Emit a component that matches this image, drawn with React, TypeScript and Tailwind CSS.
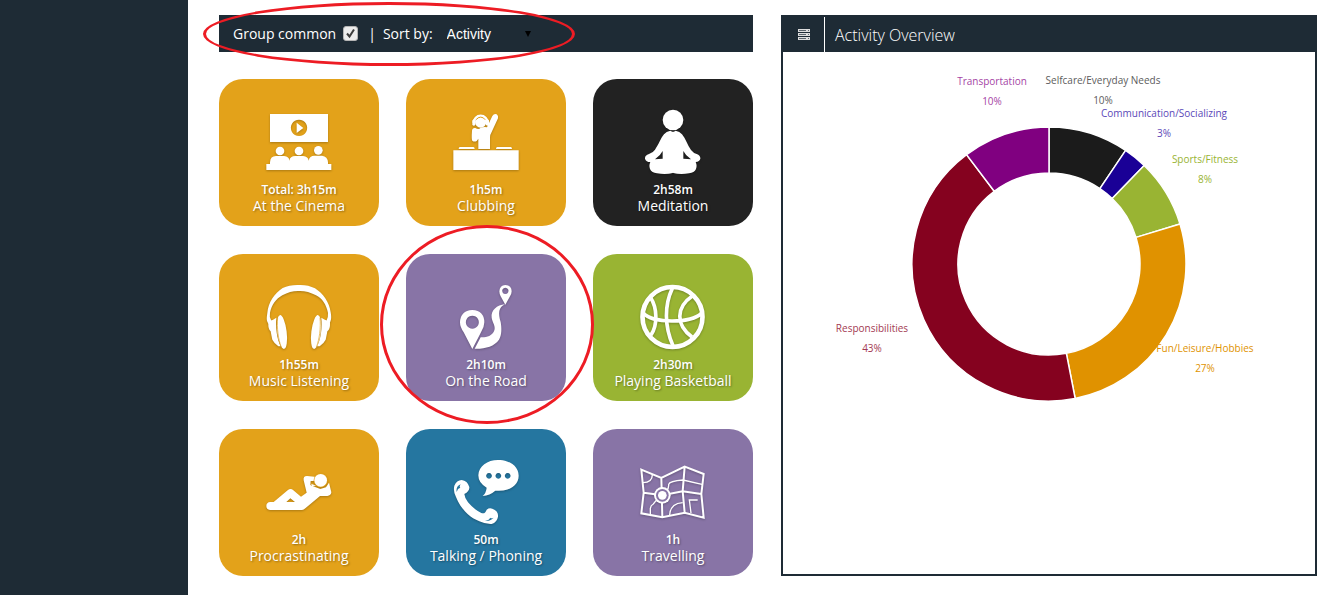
import type { ReactNode } from "react";

function Icon({ viewBox, children }: { viewBox: string; children: ReactNode }) {
  return (
    <svg
      viewBox={viewBox}
      aria-hidden="true"
      fill="currentColor"
      className="size-16 overflow-visible drop-shadow-[0_1px_1px_rgba(0,0,0,0.25)]"
    >
      {children}
    </svg>
  );
}

const CinemaIcon = () => (
  <Icon viewBox="171 120 192 192">
    <path
      fillRule="evenodd"
      d="M180 132H354V216H180ZM267 149a24.500 24.500 0 1 0 .1 0ZM260 158 280 174 260 189Z"
    />
    <circle cx="210" cy="243" r="13" />
    <circle cx="267" cy="243" r="13" />
    <circle cx="325" cy="241" r="13" />
    <path d="M169 282H180V277Q181 258 198 258H222Q238 260 238 272Q240 258 256 258H279Q295 260 296 272Q298 257 314 257H336Q353 259 354 277V282H364V300H169Z" />
  </Icon>
);

const ClubbingIcon = () => (
  <Icon viewBox="174 120 192 192">
    <path d="M172 241H368V300H172ZM188 237Q188 231 192 231H232Q236 231 236 237ZM300 237Q300 231 304 231H344Q348 231 348 237Z" />
    <circle cx="254" cy="156" r="17" />
    <path
      d="M233 158a21 21 0 0 1 42 0"
      fill="none"
      stroke="currentColor"
      strokeWidth="7"
    />
    <rect x="229" y="149" width="9" height="18" rx="4" />
    <rect x="270" y="149" width="9" height="18" rx="4" />
    <path d="M241 149a15 15 0 0 1 26 0" fill="none" stroke="#e3a21a" strokeWidth="3" />
    <path d="M228 182Q229 173 238 174Q248 180 254 173Q266 169 273 172L289 138Q294 130 302 133Q308 138 306 145L287 186Q282 194 282 202V237H247V206L242 213Q235 217 229 212Q226 208 228 182Z" />
  </Icon>
);

const MeditationIcon = () => (
  <Icon viewBox="174 120 192 192">
    <circle cx="270" cy="150" r="31" />
    <path
      fillRule="evenodd"
      d="M262 182Q270 187 278 182Q290 184 297 193C308 206 313 225 324 240Q332 250 341 252Q353 257 352 266Q350 275 338 276Q343 286 339 297Q334 308 318 310Q292 314 270 309Q248 314 222 310Q206 308 201 297Q197 286 202 276Q189 276 186 266Q185 256 198 252Q210 248 216 239C227 224 234 203 243 193Q250 184 262 182ZM239 243Q232 257 216 268L239 266ZM301 243V266L324 268Q308 257 301 243Z"
    />
    <path d="M266 182H274L270 186ZM265 312 270 308 275 312Z" fill="#222222" />
  </Icon>
);

const HeadphonesIcon = () => (
  <Icon viewBox="171 120 192 192">
    <path d="M177 238C168 228 170 218 172 204C175 172 193 145 218 129Q239 119 267 120Q294 119 315 130C340 146 358 172 362 202C365 219 364 228 356 239L350 226Q355 216 354 204C349 178 336 160 318 151Q292 137 267 138Q242 137 217 151C198 161 185 180 180 203Q177 216 184 227Z" />
    <path d="M175 233Q178 226 188 225L199 218C196 247 201 282 212 304L205 304Q192 294 187 284Q184 271 182 259Q174 252 175 233Z" />
    <path d="M360 233Q357 226 346 225L334 218C337 247 333 282 321 304L329 304Q342 294 347 284Q350 271 352 259Q361 252 360 233Z" />
    <ellipse cx="216" cy="261" rx="14" ry="51" transform="rotate(-7 216 261)" />
    <ellipse cx="318" cy="261" rx="14" ry="51" transform="rotate(7 318 261)" />
    <path
      d="M203 218C200 250 205 283 214 307M330 218C333 250 328 283 319 307"
      fill="none"
      stroke="#e3a21a"
      strokeWidth="2"
    />
  </Icon>
);

const RoadIcon = () => (
  <Icon viewBox="234 195 192 192">
    <path
      fillRule="evenodd"
      d="M289 270Q325 272 325 307Q325 321 315 337L289 387L263 337Q252 321 252 307Q253 272 289 270ZM289 287a19.500 19.500 0 1 0 .1 0Z"
    />
    <path
      fillRule="evenodd"
      d="M388 195Q407 196 407 214Q407 221 402 229L388 254L374 229Q370 221 370 214Q371 196 388 195ZM388 203a9.500 9.500 0 1 0 .1 0Z"
    />
    <path d="M387 253C363 255 344 271 347 293C349 308 361 319 354 334C347 348 332 353 314 352L296 386C327 387 355 379 369 359C378 344 377 324 374 306C366 281 367 262 387 253Z" />
  </Icon>
);

const BasketballIcon = () => (
  <Icon viewBox="174 120 192 192">
    <g fill="none" stroke="currentColor">
      <circle cx="268.500" cy="216" r="90" strokeWidth="14" />
      <g strokeWidth="11">
        <path d="M182 205C208 235 323 236 355 205" />
        <path d="M268 130C244 180 244 244 270 302" />
        <path d="M203 158C222 187 225 239 204 270" />
        <path d="M328 153C278 187 278 240 327 276" />
      </g>
    </g>
  </Icon>
);

const RecliningIcon = () => (
  <Icon viewBox="171 105 192 192">
    <path
      fillRule="evenodd"
      d="M181 231H191L233 196Q242 188 250 196L273 215L290 203L281 166Q279 153 291 153L314 155L318 163L315 168L302 168L301 180L317 187L331 192L348 187L357 173L364 202Q363 212 352 213L330 213L286 250Q281 255 276 255H180Q169 254 169 243Q169 232 181 231ZM229 231H255L241 220ZM303 176 307 183 319 182Z"
    />
    <circle cx="332" cy="166" r="21" fill="#e3a21a" />
    <circle cx="332" cy="166" r="19" />
  </Icon>
);

const PhoneIcon = () => (
  <Icon viewBox="174 105 192 192">
    <path
      fillRule="evenodd"
      d="M306 105C341 105 368 124 368 152C368 181 340 201 298 197Q282 211 260 213Q270 205 272 188Q247 174 247 151C248 123 274 105 306 105ZM279 144a8.500 8.500 0 1 0 .1 0ZM307 144a8.500 8.500 0 1 0 .1 0ZM335 144a8.500 8.500 0 1 0 .1 0Z"
    />
    <path d="M197 165Q214 167 220 186Q221 199 205 207Q206 219 216 232Q235 254 256 264Q267 268 272 254Q280 247 289 251Q308 258 306 275Q303 292 287 297Q269 298 250 289C218 276 193 249 180 216Q171 199 175 182Q182 166 197 165Z" />
    <path
      d="M182 201Q179 184 194 178Q189 185 193 188L186 192ZM267 287Q284 289 293 278Q286 282 283 278L278 284Z"
      fill="#2576a0"
    />
  </Icon>
);

const MapIcon = () => (
  <Icon viewBox="174 105 192 192">
    <g fill="none" stroke="currentColor">
      <path
        strokeWidth="6"
        d="M175 134 235 159 305 125 362 147 355 207 362 278 305 263 238 277 175 265 182 203ZM235 159 238 277M305 125 299 199 305 263M182 203 238 211 299 199 355 207"
      />
      <path
        strokeWidth="4"
        d="M208 149Q208 172 180 173M250 198Q258 190 257 178Q260 168 300 165L357 178M202 268V250Q203 241 211 237L222 223M260 270Q262 235 299 233M324 264 319 225H344"
      />
    </g>
    <circle cx="238" cy="211" r="25" />
    <circle cx="238" cy="211" r="19" fill="#8874a6" />
    <circle cx="238" cy="211" r="13" />
  </Icon>
);

const activities = [
  { name: "At the Cinema", time: "Total: 3h15m", color: "bg-[#e3a21a]", icon: <CinemaIcon /> },
  { name: "Clubbing", time: "1h5m", color: "bg-[#e3a21a]", icon: <ClubbingIcon /> },
  { name: "Meditation", time: "2h58m", color: "bg-[#222222]", icon: <MeditationIcon /> },
  { name: "Music Listening", time: "1h55m", color: "bg-[#e3a21a]", icon: <HeadphonesIcon /> },
  { name: "On the Road", time: "2h10m", color: "bg-[#8874a6]", icon: <RoadIcon />, circled: true },
  { name: "Playing Basketball", time: "2h30m", color: "bg-[#99b433]", icon: <BasketballIcon /> },
  { name: "Procrastinating", time: "2h", color: "bg-[#e3a21a]", icon: <RecliningIcon /> },
  { name: "Talking / Phoning", time: "50m", color: "bg-[#2576a0]", icon: <PhoneIcon /> },
  { name: "Travelling", time: "1h", color: "bg-[#8874a6]", icon: <MapIcon /> },
];

// Angles run clockwise in degrees from twelve o'clock.
const slices = [
  { label: "Selfcare/Everyday Needs", share: "10%", from: 0, to: 34, fill: "#1b1b1b", text: "#5c5c5c", x: 274, y: 32 },
  { label: "Communication/Socializing", share: "3%", from: 34, to: 44, fill: "#1a0096", text: "#5b48b8", x: 335, y: 65 },
  { label: "Sports/Fitness", share: "8%", from: 44, to: 73, fill: "#99b433", text: "#99b433", x: 376, y: 111 },
  { label: "Fun/Leisure/Hobbies", share: "27%", from: 73, to: 169, fill: "#e09200", text: "#e09200", x: 376, y: 300 },
  { label: "Responsibilities", share: "43%", from: 169, to: 323, fill: "#85021f", text: "#a33a52", x: 43, y: 280 },
  { label: "Transportation", share: "10%", from: 323, to: 360, fill: "#800080", text: "#a544a5", x: 163, y: 33 },
];

function point(angle: number, radius: number) {
  const a = (angle * Math.PI) / 180;
  return `${(220 + radius * Math.sin(a)).toFixed(2)} ${(212 - radius * Math.cos(a)).toFixed(2)}`;
}

function slicePath(from: number, to: number) {
  const large = to - from > 180 ? 1 : 0;
  return `M${point(from, 137)}A137 137 0 ${large} 1 ${point(to, 137)}L${point(to, 91)}A91 91 0 ${large} 0 ${point(from, 91)}Z`;
}

function DonutChart() {
  return (
    <svg
      viewBox="0 0 440 370"
      role="img"
      aria-label="Share of time by activity group"
      className="mx-auto w-[440px] max-w-full"
    >
      {slices.map((s) => (
        <path
          key={s.label}
          d={slicePath(s.from, s.to)}
          fill={s.fill}
          stroke="#ffffff"
          strokeWidth="1.5"
        />
      ))}
      {slices.map((s) => (
        <g key={s.label} fill={s.text} textAnchor="middle" className="text-[10px]">
          <text x={s.x} y={s.y}>
            {s.label}
          </text>
          <text x={s.x} y={s.y + 20}>
            {s.share}
          </text>
        </g>
      ))}
    </svg>
  );
}

function Toolbar() {
  return (
    <div className="relative flex h-[37px] items-center bg-[#1e2b35] px-3.5 text-sm text-white">
      <label htmlFor="group-common">Group common</label>
      <span className="relative ml-[7px] flex size-[15px]">
        <input
          id="group-common"
          type="checkbox"
          defaultChecked
          className="peer size-full appearance-none rounded-[3px] border border-[#b5b5b5] bg-[#ececec]"
        />
        <svg
          viewBox="0 0 15 15"
          aria-hidden="true"
          className="pointer-events-none absolute inset-0 hidden peer-checked:block"
        >
          <path
            d="M4 7.500 6.500 10.500 11 3.500"
            fill="none"
            stroke="#3c3c3c"
            strokeWidth="2"
          />
        </svg>
      </span>
      <span className="ml-2.5 mr-[7px]">|</span>
      <label htmlFor="sort-by">Sort by:</label>
      <span className="relative ml-3.5 flex items-center">
        <select
          id="sort-by"
          defaultValue="Activity"
          className="w-[88px] appearance-none bg-transparent font-['Liberation_Sans',Arial,sans-serif] text-sm text-white outline-none"
        >
          <option>Activity</option>
        </select>
        <svg
          viewBox="0 0 6 6"
          aria-hidden="true"
          className="pointer-events-none absolute right-1 size-1.5"
        >
          <path d="M0 0H6L3 6Z" fill="#000000" />
        </svg>
      </span>
      <span className="pointer-events-none absolute -left-4 -top-[13px] z-10 h-16 w-[372px] rounded-[50%] border-[3px] border-[#ed1c24]" />
    </div>
  );
}

export default function App() {
  return (
    <div className="flex min-h-screen bg-white font-['Open_Sans',sans-serif]">
      <aside className="w-[188px] shrink-0 bg-[#1e2b35]" />
      <main className="grid min-w-0 flex-1 grid-cols-[534fr_536fr] gap-7 pb-[19px] pl-[31px] pr-6 pt-[15px]">
        <section aria-label="Activities" className="flex min-w-0 flex-col gap-[27px]">
          <Toolbar />
          <ul className="grid grid-cols-3 gap-x-[27px] gap-y-7">
            {activities.map((a) => (
              <li key={a.name} className="relative">
                <button
                  type="button"
                  className={`flex w-full flex-col items-center rounded-3xl pb-3 pt-[31px] text-white [text-shadow:1px_1px_2px_rgba(0,0,0,0.35)] ${a.color}`}
                >
                  {a.icon}
                  <span className="mt-2 text-xs leading-4 font-semibold">{a.time}</span>
                  <span className="text-sm leading-4">{a.name}</span>
                </button>
                {a.circled && (
                  <span className="pointer-events-none absolute -left-[26px] -right-7 -bottom-[23px] -top-[29px] z-10 rounded-[50%] border-[3px] border-[#ed1c24]" />
                )}
              </li>
            ))}
          </ul>
        </section>
        <section
          aria-labelledby="overview-title"
          className="flex min-w-0 flex-col border-2 border-[#1e2b35]"
        >
          <header className="flex h-[35px] items-stretch bg-[#1e2b35] text-white">
            <button
              type="button"
              aria-label="Chart options"
              className="flex w-[42px] items-center justify-center border-r border-white"
            >
              <svg viewBox="0 0 12 11" aria-hidden="true" className="h-[11px] w-3">
                <path d="M0 0H12V3H0ZM0 4H12V7H0ZM0 8H12V11H0Z" fill="#dddddd" />
                <path d="M1 1H8V2H1ZM1 5H8V6H1ZM1 9H8V10H1ZM10 1H11V2H10ZM10 5H11V6H10ZM10 9H11V10H10Z" fill="#5d666d" />
              </svg>
            </button>
            <h2 id="overview-title" className="pl-2.5 text-base leading-9 font-light">
              Activity Overview
            </h2>
          </header>
          <DonutChart />
        </section>
      </main>
    </div>
  );
}
